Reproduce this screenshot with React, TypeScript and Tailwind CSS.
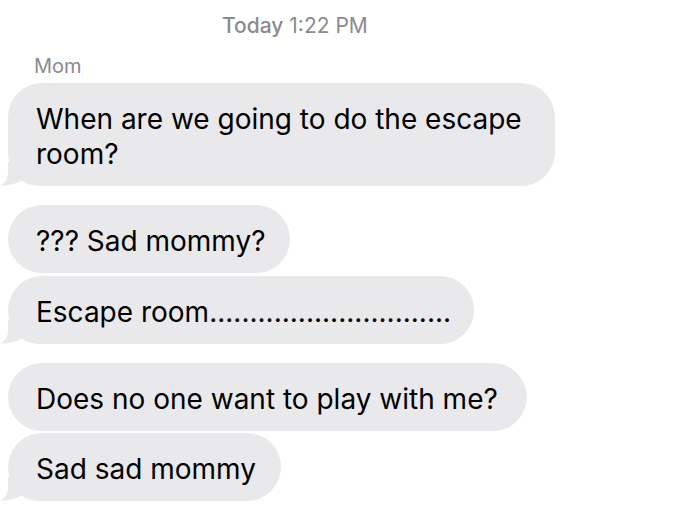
import React from "react";

const Tail = () => (
  <svg
    className="absolute left-[-8px] bottom-0"
    width="46"
    height="24"
    viewBox="0 0 46 24"
  >
    <path
      d="M8 0 L8 10 C8 17 5 21 0 23.6 C8 23.8 16 21.5 22 18.5 C26 21.8 32 24 44 24 L44 0 Z"
      fill="#e9e9eb"
    />
  </svg>
);

type BubbleProps = { text: React.ReactNode; w: string; tail?: boolean; extra?: string };

const Bubble = ({ text, w, tail, extra = "" }: BubbleProps) => (
  <div
    className={`relative ml-[8px] rounded-[34px] bg-[#e9e9eb] pl-[28px] pr-[20px] pt-[19px] pb-[14px] text-[28px] leading-[35px] tracking-[0px] text-black ${w} ${extra}`}
  >
    <span className="relative z-10 whitespace-nowrap">{text}</span>
    {tail && <Tail />}
  </div>
);

export default function App() {
  return (
    <div
      className="h-[507px] w-[680px] overflow-hidden bg-white"
      style={{ fontFamily: 'Inter, "Liberation Sans", Arial, sans-serif' }}
    >
      <div className="ml-[222px] pt-[14px] text-[21px] leading-[24px] text-[#8a8a8e]">
        <span className="font-medium">Today</span> 1:22 PM
      </div>
      <div className="ml-[34px] mt-[16px] text-[20px] leading-[24px] text-[#8a8a8e]">Mom</div>
      <div className="mt-[5px] flex flex-col">
        <Bubble w="w-[547px]" text={<>When are we going to do the escape<br />room?</>} tail />
        <Bubble w="w-[282px]" extra="mt-[19px]" text="??? Sad mommy?" />
        <Bubble w="w-[466px]" extra="mt-[3px]" text="Escape room.............................." tail />
        <Bubble w="w-[519px]" extra="mt-[19px]" text="Does no one want to play with me?" />
        <Bubble w="w-[273px]" extra="mt-[2px]" text="Sad sad mommy" tail />
      </div>
    </div>
  );
}
